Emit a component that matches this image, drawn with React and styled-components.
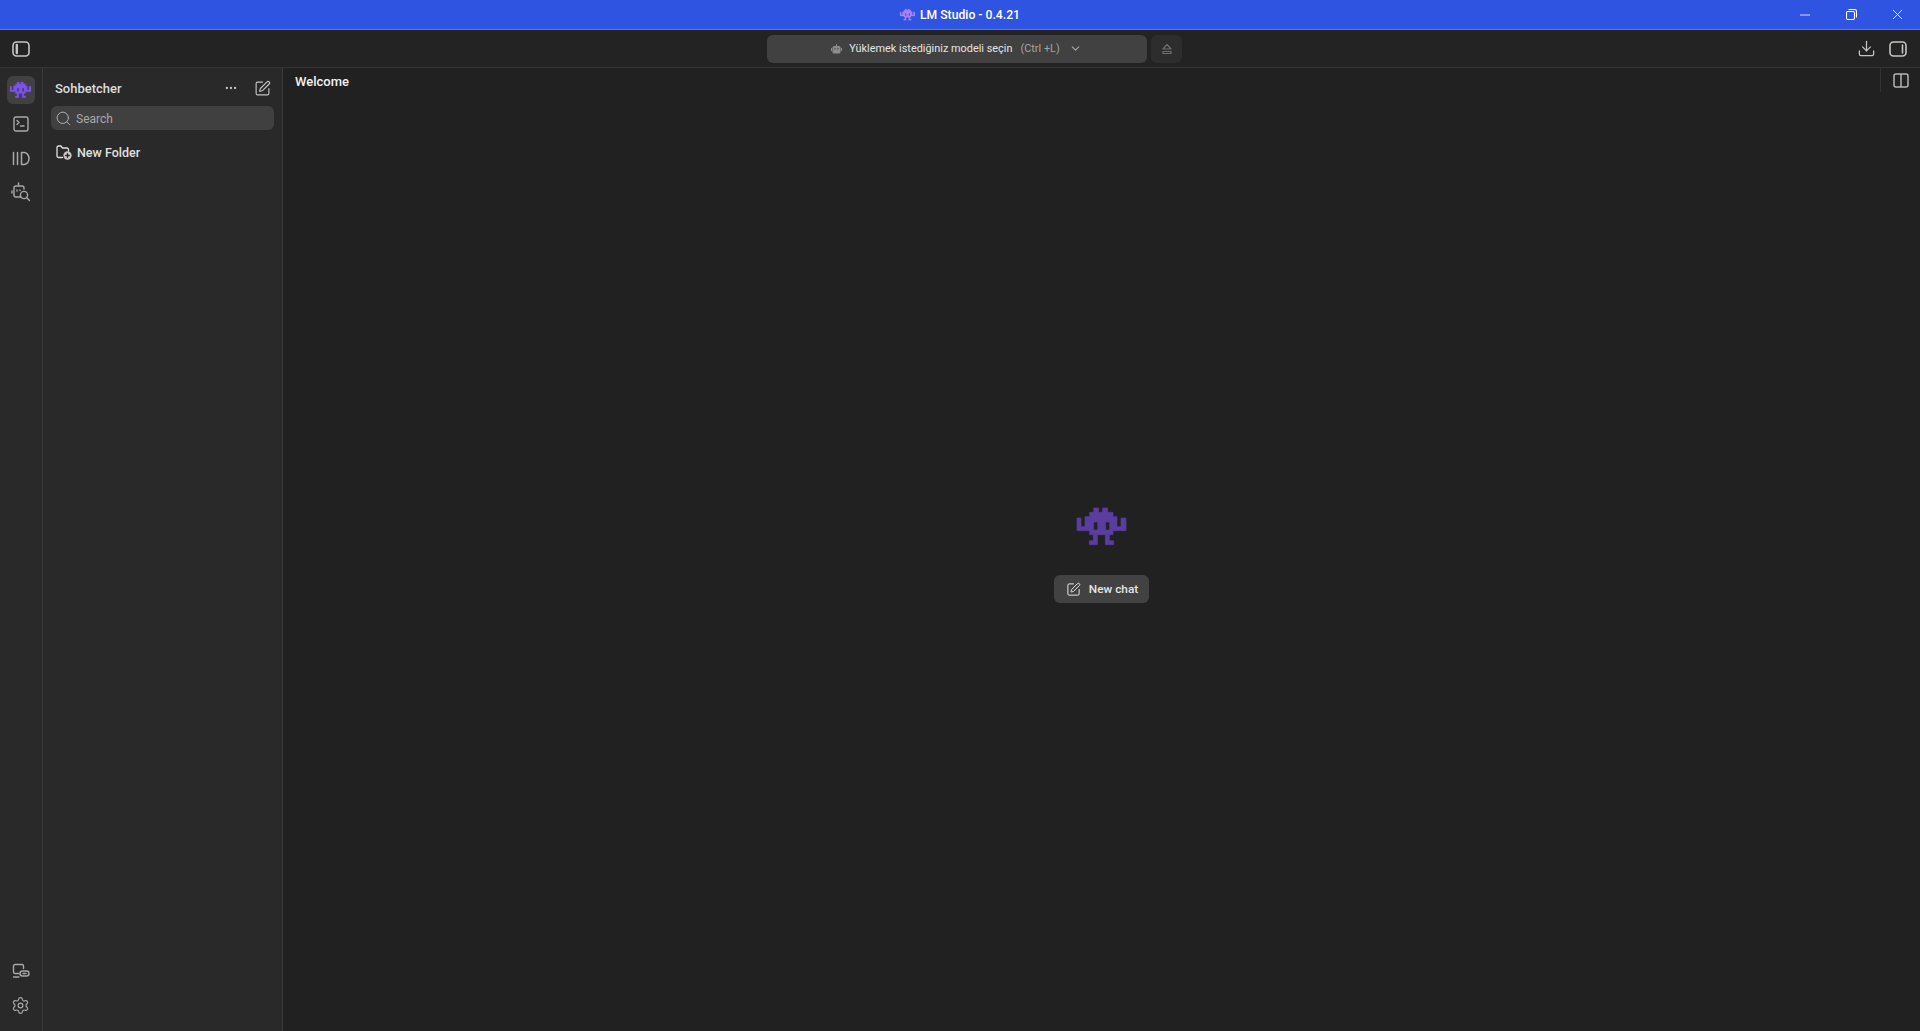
import React from 'react';
import styled, { createGlobalStyle } from 'styled-components';
import { SquarePen, Ellipsis, Search, Settings, Download, ChevronDown, Minus, X } from 'lucide-react';

const Global = createGlobalStyle`
  html, body { margin: 0; padding: 0; height: 100%; background: #212121; overflow: hidden; }
  #root { height: 100%; }
  * { box-sizing: border-box; }
`;

const FONT = `Roboto, "Noto Sans", sans-serif`;

const Page = styled.div`
  width: 1920px; height: 1031px; display: flex; flex-direction: column;
  font-family: ${FONT}; color: #e8e8e8; background: #212121;
`;
const TitleBar = styled.header`
  height: 30px; flex: none; background: #2f54e2; border-bottom: 1px solid #5a78e6;
  position: relative; display: flex; align-items: center; justify-content: center; gap: 5px;
`;
const TitleText = styled.span`
  font-size: 12.2px; font-weight: 500; color: #fff;
`;
const WindowControls = styled.div`
  position: absolute; right: 0; top: 0; height: 29px; display: flex;
`;
const WindowButton = styled.div`
  width: 46px; height: 29px; display: flex; align-items: center; justify-content: center; color: #fff;
`;
const Toolbar = styled.div`
  height: 38px; flex: none; background: #232323; border-bottom: 1px solid #343434;
  display: grid; grid-template-columns: 767px 380px 35px 1fr; align-items: center;
`;
const ToolbarLeft = styled.div`
  padding-left: 12px; display: flex; align-items: center; color: #c4c4c4;
`;
const ModelSelect = styled.div`
  height: 28px; background: #414141; border-radius: 6px; display: flex; align-items: center;
  justify-content: center; font-size: 10.9px; color: #e4e4e4; padding-right: 1px;
`;
const ModelHint = styled.span`
  color: #a3a3a3; margin-left: 8px;
`;
const Chevron = styled(ChevronDown)`
  margin-left: 9px; color: #aaa;
`;
const BotSlot = styled.span`
  display: flex; margin-right: 7px;
`;
const EjectButton = styled.div`
  width: 31px; height: 28px; margin-left: 4px; background: #2d2d2d; border-radius: 6px;
  display: flex; align-items: center; justify-content: center; color: #6e6e6e;
`;
const ToolbarRight = styled.div`
  display: flex; justify-content: flex-end; align-items: center; gap: 13px; padding-right: 13px; color: #c4c4c4;
`;
const Body = styled.div`
  flex: 1; display: flex; min-height: 0;
`;
const Rail = styled.nav`
  width: 43px; flex: none; background: #292929; border-right: 1px solid #3a3a3a;
  display: flex; flex-direction: column; align-items: center; padding: 8px 0 12px; color: #a8a8a8;
`;
const RailButton = styled.div`
  width: 28px; height: 28px; margin-right: 1px; margin-bottom: ${p => (p.$last ? 0 : 6)}px; border-radius: 6px; display: flex;
  align-items: center; justify-content: center;
  background: ${p => (p.$active ? '#424040' : 'transparent')};
`;
const RailSpacer = styled.div`flex: 1;`;
const Sidebar = styled.aside`
  width: 240px; flex: none; background: #292929; border-right: 1px solid #3a3a3a;
  padding: 8px 8px 0 8px;
`;
const SidebarHead = styled.div`
  height: 24px; display: flex; align-items: center; padding: 0 3px 0 4px;
  margin-bottom: 6px;
`;
const SidebarTitle = styled.h2`
  flex: 1; margin: 0; font-size: 13px; font-weight: 500; color: #dcdcdc;
`;
const HeadIcon = styled.span`
  display: flex; color: #c4c4c4; margin-left: ${p => p.$gap || 0}px;
`;
const SearchBox = styled.div`
  width: 223px; height: 24px; background: #404040; border-radius: 6px; display: flex;
  align-items: center; padding-left: 4px; gap: 4px; color: #a8a8a8; font-size: 12px;
`;
const SearchLabel = styled.span`
  padding-top: 1px;
`;
const SearchIcon = styled(Search)`
  color: #b0b0b0;
`;
const FolderRow = styled.div`
  margin-top: 10px; height: 24px; display: flex; align-items: center; gap: 5px; padding-left: 5px;
  font-size: 12.5px; font-weight: 500; color: #e0e0e0;
`;
const Main = styled.main`
  flex: 1; display: flex; flex-direction: column; min-width: 0; background: #212121;
`;
const MainHead = styled.div`
  height: 24px; flex: none; display: flex; align-items: center; justify-content: space-between;
  padding-left: 12px; font-size: 13px; font-weight: 500; color: #f2f2f2;
`;
const WelcomeLabel = styled.span`
  padding-top: 2px;
`;
const HeadPanel = styled.div`
  width: 40px; height: 24px; border-left: 1px solid #333; display: flex; align-items: center;
  justify-content: center; color: #b4b4b4;
`;
const Welcome = styled.div`
  flex: 1; display: flex; flex-direction: column; align-items: center; justify-content: center;
  gap: 31px; padding-bottom: 12px;
`;
const NewChat = styled.button`
  width: 95px; height: 28px; border: 0; border-radius: 6px; background: #424242; color: #e6e6e6;
  display: flex; align-items: center; justify-content: center; gap: 8px; padding: 0 0 0 1px;
  font: 500 11.800px ${FONT};
`;

const Invader = ({ size, color }) => (
  <svg width={size} height={size * 110 / 147} viewBox="0 0 147 110" fill={color} stroke={color} strokeWidth="2" fillRule="evenodd" overflow="visible">
    <path d="M50 0h15v13h12V0h15v13h16v13h12v30h12V30h15v38H108v12H97v18h13v12H85V80H61v30H37V98h12V80H38V68H0V30h12v26h12V26h14V13h12zM50 42h12v24H50zM86 42h12v24H86z" />
  </svg>
);
const PanelIcon = ({ side }) => (
  <svg width="18" height="16" viewBox="0 0 18 16" fill="none" stroke="currentColor" strokeWidth="1.600">
    <rect x="1" y="1" width="16" height="14" rx="3.500" />
    {side === 'left' && <path d="M4.800 4v8" strokeWidth="2.400" strokeLinecap="round" />}
    {side === 'right' && <path d="M13.500 4v8" strokeWidth="1.600" strokeLinecap="round" />}
  </svg>
);
const SplitIcon = () => (
  <svg width="16" height="15" viewBox="0 0 16 15" fill="none" stroke="currentColor" strokeWidth="1.500">
    <rect x="1" y="1" width="14" height="13" rx="2" />
    <path d="M8 1v13" />
  </svg>
);
const TerminalIcon = () => (
  <svg width="16" height="16" viewBox="0 0 16 16" fill="none" stroke="currentColor" strokeWidth="1.400" strokeLinecap="round" strokeLinejoin="round">
    <rect x="1" y="1" width="14" height="14" rx="2" />
    <path d="M4 4.500 6 6.500 4 8.500M7.500 10H11" />
  </svg>
);
const LibraryIcon = () => (
  <svg width="18" height="15" viewBox="0 0 18 15" fill="none" stroke="currentColor" strokeWidth="1.500" strokeLinecap="round" strokeLinejoin="round">
    <path d="M1.500 1.500v12M5.500 1.500v12M9.500 1.500v12h2.500a5 6 0 0 0 0-12z" />
  </svg>
);
const BotSearchIcon = () => (
  <svg width="20" height="20" viewBox="0 0 20 20" fill="none" stroke="currentColor" strokeWidth="1.400" strokeLinecap="round" strokeLinejoin="round">
    <path d="M7.500 1v3M10 15H5a2 2 0 0 1-2-2V6a2 2 0 0 1 2-2h6a2 2 0 0 1 2 2v1M1 9v2M6 8v1M9 8v.5" />
    <circle cx="13" cy="13" r="3.600" />
    <path d="M15.800 15.800 18.500 18.500" />
  </svg>
);
const LinkDeviceIcon = () => (
  <svg width="18" height="16" viewBox="0 0 18 16" fill="none" stroke="currentColor" strokeWidth="1.400" strokeLinecap="round" strokeLinejoin="round">
    <path d="M7 10.500H3a1.500 1.500 0 0 1-1.500-1.500V3A1.500 1.500 0 0 1 3 1.500h7A1.500 1.500 0 0 1 11.500 3v2.500M1.500 14H7" />
    <rect x="8" y="8" width="9" height="5" rx="2.500" />
    <path d="M11 10.500h3" />
  </svg>
);
const FolderAddIcon = () => (
  <svg width="16" height="15" viewBox="0 0 16 15" fill="none" stroke="currentColor" strokeWidth="1.300" strokeLinecap="round" strokeLinejoin="round">
    <path d="M6.500 12.500H2.500A1.500 1.500 0 0 1 1 11V2.500A1.500 1.500 0 0 1 2.500 1h2.500l1.500 2h4.500A1.500 1.500 0 0 1 12.500 4.500v1.500" />
    <circle cx="11.500" cy="10.500" r="3.500" fill="#c8c8c8" stroke="#c8c8c8" />
    <path d="M11.500 8.700v3.600M9.700 10.500h3.600" stroke="#292929" />
  </svg>
);
const RestoreIcon = () => (
  <svg width="11" height="11" viewBox="0 0 11 11" fill="none" stroke="currentColor" strokeWidth="1.100">
    <rect x="0.500" y="2.500" width="8" height="8" rx="1.500" />
    <path d="M2.500 0.500h6a2 2 0 0 1 2 2v6" />
  </svg>
);
const EjectIcon = () => (
  <svg width="12" height="12" viewBox="0 0 12 12" fill="none" stroke="currentColor" strokeWidth="1.200" strokeLinejoin="round">
    <path d="M6 1.500 10 6H2zM2 8.500h8v2H2z" />
  </svg>
);
const BotGlyph = () => (
  <svg width="11" height="10" viewBox="0 0 11 10" fill="#8c8c8c">
    <rect x="1.500" y="2" width="8" height="7.500" rx="1.500" />
    <rect x="0" y="4" width="1" height="3" />
    <rect x="10" y="4" width="1" height="3" />
    <rect x="5" y="0" width="1" height="2" />
    <rect x="3.500" y="4" width="1" height="1.500" fill="#414141" />
    <rect x="6.500" y="4" width="1" height="1.500" fill="#414141" />
  </svg>
);

export default function App() {
  return (
    <Page>
      <Global />
      <TitleBar>
        <Invader size={15} color="#a884f2" />
        <TitleText>LM Studio - 0.4.21</TitleText>
        <WindowControls>
          <WindowButton><Minus size={16} strokeWidth={1.200} /></WindowButton>
          <WindowButton><RestoreIcon /></WindowButton>
          <WindowButton><X size={17} strokeWidth={1.200} /></WindowButton>
        </WindowControls>
      </TitleBar>
      <Toolbar>
        <ToolbarLeft><PanelIcon side="left" /></ToolbarLeft>
        <ModelSelect>
          <BotSlot><BotGlyph /></BotSlot>
          Yüklemek istediğiniz modeli seçin
          <ModelHint>(Ctrl +L)</ModelHint>
          <Chevron size={13} />
        </ModelSelect>
        <EjectButton><EjectIcon /></EjectButton>
        <ToolbarRight>
          <Download size={19} strokeWidth={1.600} />
          <PanelIcon side="right" />
        </ToolbarRight>
      </Toolbar>
      <Body>
        <Rail>
          <RailButton $active><Invader size={21} color="#7b52ea" /></RailButton>
          <RailButton><TerminalIcon /></RailButton>
          <RailButton><LibraryIcon /></RailButton>
          <RailButton><BotSearchIcon /></RailButton>
          <RailSpacer />
          <RailButton><LinkDeviceIcon /></RailButton>
          <RailButton $last><Settings size={19} strokeWidth={1.500} /></RailButton>
        </Rail>
        <Sidebar>
          <SidebarHead>
            <SidebarTitle>Sohbetcher</SidebarTitle>
            <HeadIcon><Ellipsis size={14} /></HeadIcon>
            <HeadIcon $gap={16}><SquarePen size={17} strokeWidth={1.600} /></HeadIcon>
          </SidebarHead>
          <SearchBox><SearchIcon size={17} strokeWidth={1.400} /><SearchLabel>Search</SearchLabel></SearchBox>
          <FolderRow><FolderAddIcon />New Folder</FolderRow>
        </Sidebar>
        <Main>
          <MainHead>
            <WelcomeLabel>Welcome</WelcomeLabel>
            <HeadPanel><SplitIcon /></HeadPanel>
          </MainHead>
          <Welcome>
            <Invader size={49} color="#5a3d9e" />
            <NewChat><SquarePen size={15} strokeWidth={1.600} />New chat</NewChat>
          </Welcome>
        </Main>
      </Body>
    </Page>
  );
}
